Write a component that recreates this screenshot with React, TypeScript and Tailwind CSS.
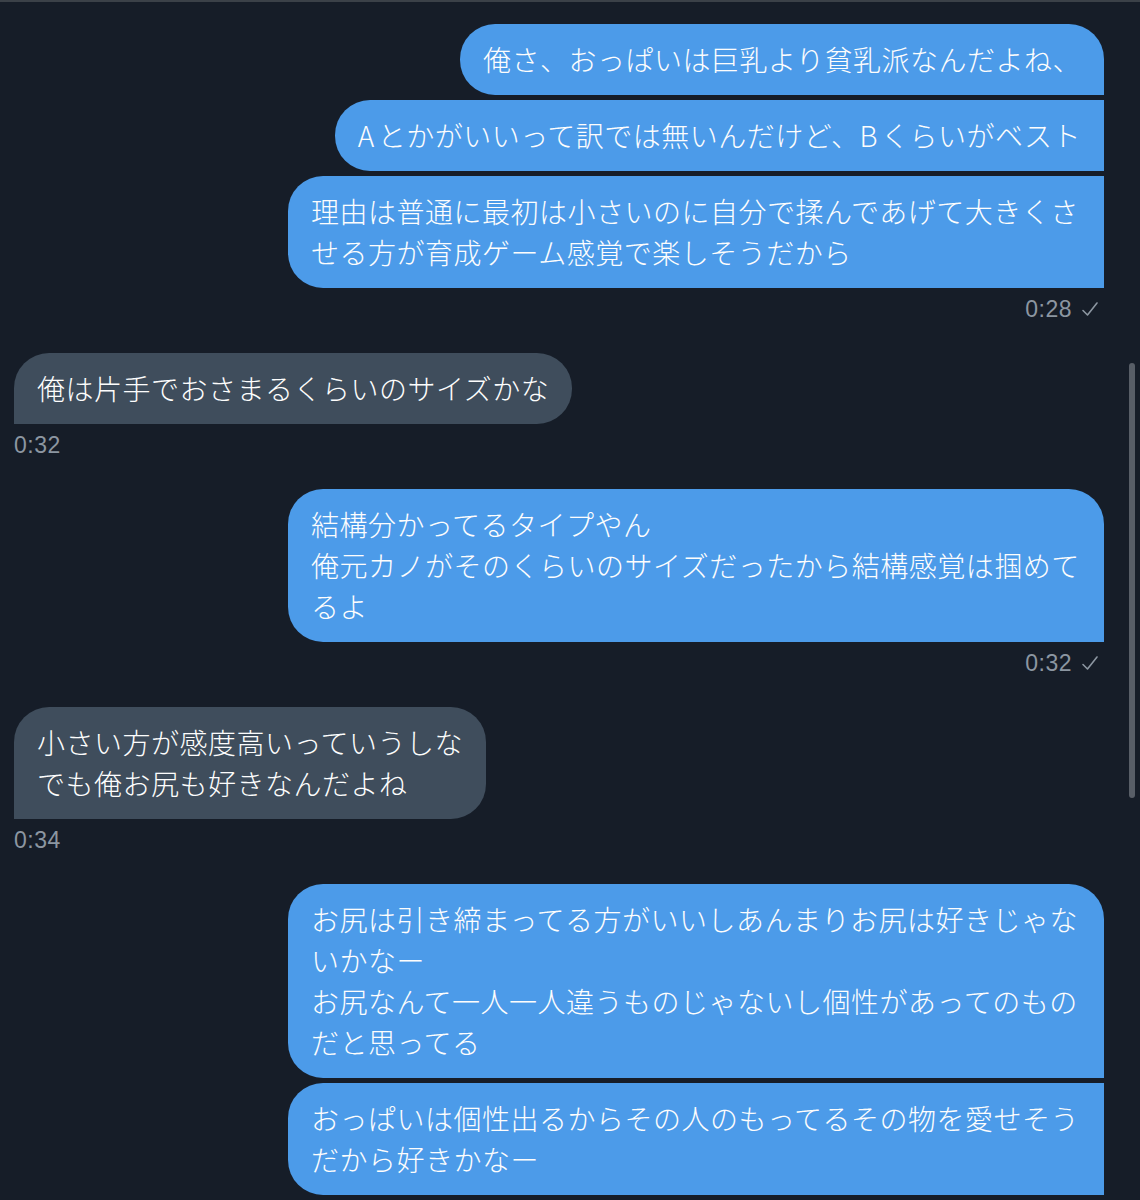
import React from "react";

const FONT = { fontFamily: '"Noto Sans CJK JP", "Noto Sans", sans-serif' };

function Check() {
  return (
    <svg width="18" height="16" viewBox="0 0 18 16" fill="none" className="ml-[9px]">
      <path d="M2 9.5 L6.5 14 L16 2" stroke="#8c96a1" strokeWidth="1.6" strokeLinecap="round" strokeLinejoin="round" />
    </svg>
  );
}

function Sent({ lines, cls, wide }: { lines: React.ReactNode[]; cls: string; wide?: boolean }) {
  return (
    <div
      className={`bg-[#4c9be9] text-[#fdfdfd] font-light text-[28px] leading-[41px] tracking-[0.5px] px-[23px] py-[15px] whitespace-nowrap ${wide ? "w-[816px]" : "w-fit"} ${cls}`}
    >
      {lines.map((l, i) => (
        <div key={i}>{l}</div>
      ))}
    </div>
  );
}

function Recv({ lines }: { lines: string[] }) {
  return (
    <div className="bg-[#3f4d5c] text-[#fdfdfd] font-light text-[28px] leading-[41px] tracking-[0.5px] px-[23px] py-[15px] whitespace-nowrap w-fit rounded-tl-[35px] rounded-tr-[35px] rounded-br-[35px]">
      {lines.map((l, i) => (
        <div key={i}>{l}</div>
      ))}
    </div>
  );
}

function Time({ t, check }: { t: string; check?: boolean }) {
  return (
    <div
      className={`mt-[9px] h-[24px] flex items-center text-[23px] text-[#8c96a1] ${check ? "justify-end pr-[5px]" : "justify-start"}`}
      style={{ fontFamily: '"Liberation Sans", Arial, sans-serif' }}
    >
      <span className="tracking-[0.5px]">{t}</span>
      {check && <Check />}
    </div>
  );
}

export default function App() {
  return (
    <div className="relative w-[1140px] h-[1200px] overflow-hidden bg-[#161d28] border-t-2 border-[#3b4148]" style={FONT}>
      <div className="flex flex-col pt-[22px] pl-[14px] pr-[36px]">
        {/* group 1 */}
        <div className="flex flex-col items-end gap-[5px]">
          <Sent lines={["俺さ、おっぱいは巨乳より貧乳派なんだよね、"]} cls="rounded-tl-[35px] rounded-tr-[35px] rounded-bl-[35px]" />
          <Sent
            lines={[
              <>
                <span className="mr-[3px]">A</span>とかがいいって訳では無いんだけど、<span className="mr-[3px]">B</span>くらいがベスト
              </>,
            ]}
            cls="rounded-tl-[35px] rounded-bl-[35px]"
          />
          <Sent
            wide
            lines={["理由は普通に最初は小さいのに自分で揉んであげて大きくさ", "せる方が育成ゲーム感覚で楽しそうだから"]}
            cls="rounded-tl-[35px] rounded-bl-[35px]"
          />
        </div>
        <Time t="0:28" check />

        <div className="mt-[32px] flex flex-col items-start">
          <Recv lines={["俺は片手でおさまるくらいのサイズかな"]} />
        </div>
        <Time t="0:32" />

        <div className="mt-[32px] flex flex-col items-end">
          <Sent
            wide
            lines={["結構分かってるタイプやん", "俺元カノがそのくらいのサイズだったから結構感覚は掴めて", "るよ"]}
            cls="rounded-tl-[35px] rounded-tr-[35px] rounded-bl-[35px]"
          />
        </div>
        <Time t="0:32" check />

        <div className="mt-[32px] flex flex-col items-start">
          <Recv lines={["小さい方が感度高いっていうしな", "でも俺お尻も好きなんだよね"]} />
        </div>
        <Time t="0:34" />

        <div className="mt-[32px] flex flex-col items-end gap-[5px]">
          <Sent
            wide
            lines={[
              "お尻は引き締まってる方がいいしあんまりお尻は好きじゃな",
              "いかなー",
              "お尻なんて一人一人違うものじゃないし個性があってのもの",
              "だと思ってる",
            ]}
            cls="rounded-tl-[35px] rounded-tr-[35px] rounded-bl-[35px]"
          />
          <Sent
            wide
            lines={["おっぱいは個性出るからその人のもってるその物を愛せそう", "だから好きかなー"]}
            cls="rounded-tl-[35px] rounded-bl-[35px]"
          />
        </div>
      </div>

      {/* scrollbar overlay */}
      <div className="absolute left-[1129px] top-[361px] w-[6px] h-[435px] rounded-full bg-[#585e67]" />
    </div>
  );
}
